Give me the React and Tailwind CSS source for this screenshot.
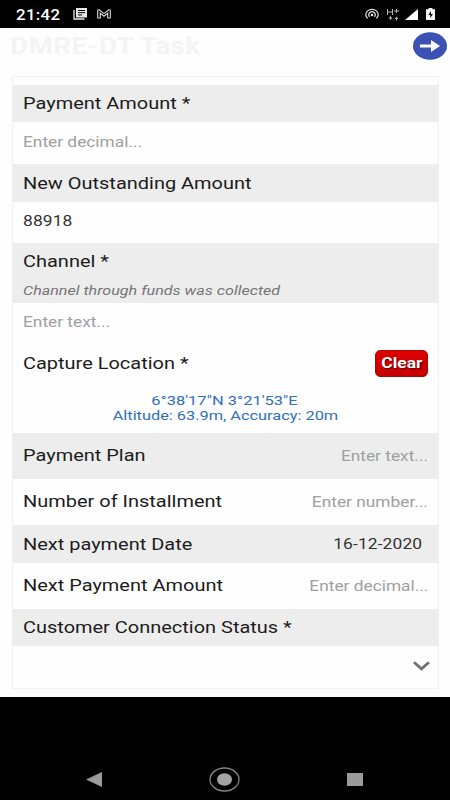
const Label = ({ children }) => (
  <span className="origin-left scale-x-[1.21] whitespace-nowrap pt-px text-[16.5px] leading-5 text-[#1c1c1c]">{children}</span>
);

const Hint = ({ children, right }) => (
  <span className={`${right ? "origin-right pt-px" : "origin-left"} scale-x-[1.21] whitespace-nowrap text-[14.3px] leading-5 text-[#a0a0a0]`}>{children}</span>
);

const Row = ({ children, shaded, className }) => (
  <div className={`flex shrink-0 items-center justify-between ${shaded ? "-mx-px bg-[#ededed] px-[11px]" : "px-[10px]"} ${className}`}>{children}</div>
);

const StatusBar = () => (
  <div className="flex h-7 shrink-0 items-center justify-between bg-black pl-4 pr-[15px] text-white">
    <div className="flex items-center">
      <span className="mt-0.5 w-[57px] origin-left scale-x-[1.2] text-[14px] font-medium leading-5 tracking-[0.3px]">21:42</span>
      <svg className="h-[12px] w-[14px]" viewBox="0 0 14 12" fill="none">
        <path d="M1 2v9h10.500" stroke="#e8e8e8" strokeWidth="1.300" />
        <path d="M3 0h11v9.500H3z" fill="#e8e8e8" />
        <path d="M5 2.500h7M5 4.700h7M5 7h4" stroke="#000" strokeWidth="1" />
      </svg>
      <svg className="ml-2.5 h-[10px] w-[14px]" viewBox="0 0 14 10" fill="none" stroke="#d8d8d8" strokeWidth="1.100">
        <path d="M.7 9V1.200L2.300.8 7 4.600 11.700.8l1.600.4V9h-2.600V4.200L7 7.200 3.300 4.200V9z" />
      </svg>
    </div>
    <div className="flex items-center">
      <svg className="h-[12px] w-[14px]" viewBox="0 0 14 12" fill="none" stroke="#e8e8e8" strokeWidth="1.200">
        <path d="M2.600 10.200a6.200 5.200 0 1 1 8.800 0M4.600 8.800a3.300 2.900 0 1 1 4.800 0" />
        <circle cx="7" cy="7" r="1.300" fill="#e8e8e8" stroke="none" />
      </svg>
      <svg className="ml-[8px] h-[13px] w-[12px]" viewBox="0 0 12 13" fill="none" stroke="#b4b4b4">
        <path d="M.5 1v6M5.500 1v6M.5 4h5M7 3h5M9.500 1v4" />
        <path d="M3.500 8v3M9.500 12.500v-3" />
        <path d="M1.500 9.500h4l-2 2.500zM7.500 11h4l-2-2.500z" fill="#b4b4b4" stroke="none" />
      </svg>
      <svg className="ml-[6px] h-[11px] w-[13px]" viewBox="0 0 13 11">
        <path d="M13 0v11H0z" fill="#fff" />
      </svg>
      <svg className="ml-2 h-[12px] w-[9px]" viewBox="0 0 9 12">
        <path d="M0 1.300h2.500V0h4v1.300H9V12H0z" fill="#f4f4f4" />
        <path d="M5 3L2.300 7h2v3l2.600-4H5z" fill="#000" />
      </svg>
    </div>
  </div>
);

const NavBar = () => (
  <div className="flex h-[103px] shrink-0 items-end justify-between bg-black pb-[8px] pl-[86px] pr-[87px]">
    <svg className="mb-[5px] h-[15px] w-[16px]" viewBox="0 0 16 15">
      <path d="M16 0v15L0 7.500z" fill="#9b9b9b" />
    </svg>
    <svg className="h-[25px] w-[31px]" viewBox="0 0 31 25">
      <ellipse cx="15.500" cy="12.500" rx="14.500" ry="11.500" fill="none" stroke="#858585" strokeWidth="1.300" />
      <ellipse cx="15.500" cy="12.500" rx="7.500" ry="6.200" fill="#a3a3a3" />
    </svg>
    <div className="mb-[6px] h-[13px] w-4 bg-[#9b9b9b]"></div>
  </div>
);

const App = () => {
  return (
    <div className="flex h-[800px] w-[450px] flex-col overflow-hidden bg-[#fefefe] font-[Roboto,sans-serif]">
      <StatusBar />
      <div className="flex h-12 shrink-0 items-start justify-between pl-2.5 pr-[3px]">
        <h1 className="mt-[5px] origin-left scale-x-[1.22] whitespace-nowrap text-[23px] font-bold leading-7 tracking-[0.2px] text-[#f4f4f4]">DMRE-DT Task</h1>
        <svg className="mt-1 h-[28px] w-[34px]" viewBox="0 0 34 28">
          <ellipse cx="17" cy="14" rx="17" ry="13.800" fill="#3b51b3" />
          <path d="M7 12.400h11V8l9 6-9 6v-4.400H7z" fill="#fff" />
        </svg>
      </div>
      <div className="ml-3 flex h-[613px] w-[427px] shrink-0 flex-col border border-[#f1f1f1] pt-2">
        <Row shaded className="h-[37px]"><Label>Payment Amount *</Label></Row>
        <Row className="h-[42px] pb-[3px]"><Hint>Enter decimal...</Hint></Row>
        <Row shaded className="h-[38px]"><Label>New Outstanding Amount</Label></Row>
        <Row className="h-[41px] pb-[1px]">
          <span className="origin-left scale-x-[1.2] text-[14.5px] tracking-[0.1px] text-[#333]">88918</span>
        </Row>
        <div className="-mx-px flex h-[60px] shrink-0 flex-col items-start bg-[#ededed] pl-[11px] pt-[8px]">
          <Label>Channel *</Label>
          <span className="mt-[9px] origin-left scale-x-[1.22] whitespace-nowrap text-[13.2px] italic leading-5 text-[#757575]">Channel through funds was collected</span>
        </div>
        <Row className="h-[38px]"><Hint>Enter text...</Hint></Row>
        <Row className="h-[44px]">
          <Label>Capture Location *</Label>
          <button className="flex h-[27px] w-[53px] items-center justify-center rounded-[5px] border border-[#a80808] bg-linear-to-b from-[#e00000] to-[#c40000]">
            <span className="scale-x-[1.22] pt-[2px] text-[14.3px] font-bold text-white [text-shadow:1px_1px_1px_#500]">Clear</span>
          </button>
        </Row>
        <div className="flex h-[48px] shrink-0 flex-col items-center pr-px pt-2 text-[13.4px] leading-[15px] text-[#2f6fb9]">
          <span className="scale-x-[1.23] whitespace-nowrap">6°38'17"N 3°21'53"E</span>
          <span className="scale-x-[1.22] whitespace-nowrap">Altitude: 63.9m, Accuracy: 20m</span>
        </div>
        <Row shaded className="h-[46px] pb-[2px]"><Label>Payment Plan</Label><Hint right>Enter text...</Hint></Row>
        <Row className="h-[46px] pb-[2px]"><Label>Number of Installment</Label><Hint right>Enter number...</Hint></Row>
        <Row shaded className="h-[38px]">
          <Label>Next payment Date</Label>
          <span className="mr-[6px] origin-right scale-x-[1.2] pt-[2px] text-[14.5px] tracking-[0.1px] text-[#333]">16-12-2020</span>
        </Row>
        <Row className="h-[46px] pb-[2px]"><Label>Next Payment Amount</Label><Hint right>Enter decimal...</Hint></Row>
        <Row shaded className="h-[37px]"><Label>Customer Connection Status *</Label></Row>
        <div className="flex h-[41px] items-center justify-end pr-[8px]">
          <svg className="mb-[1px] h-[10px] w-[17px]" viewBox="0 0 17 10" fill="none" stroke="#707070" strokeWidth="2.800">
            <path d="M1 1.300l7.500 6.500L16 1.300" />
          </svg>
        </div>
      </div>
      <div className="h-2 shrink-0"></div>
      <NavBar />
    </div>
  );
};

export default App;
